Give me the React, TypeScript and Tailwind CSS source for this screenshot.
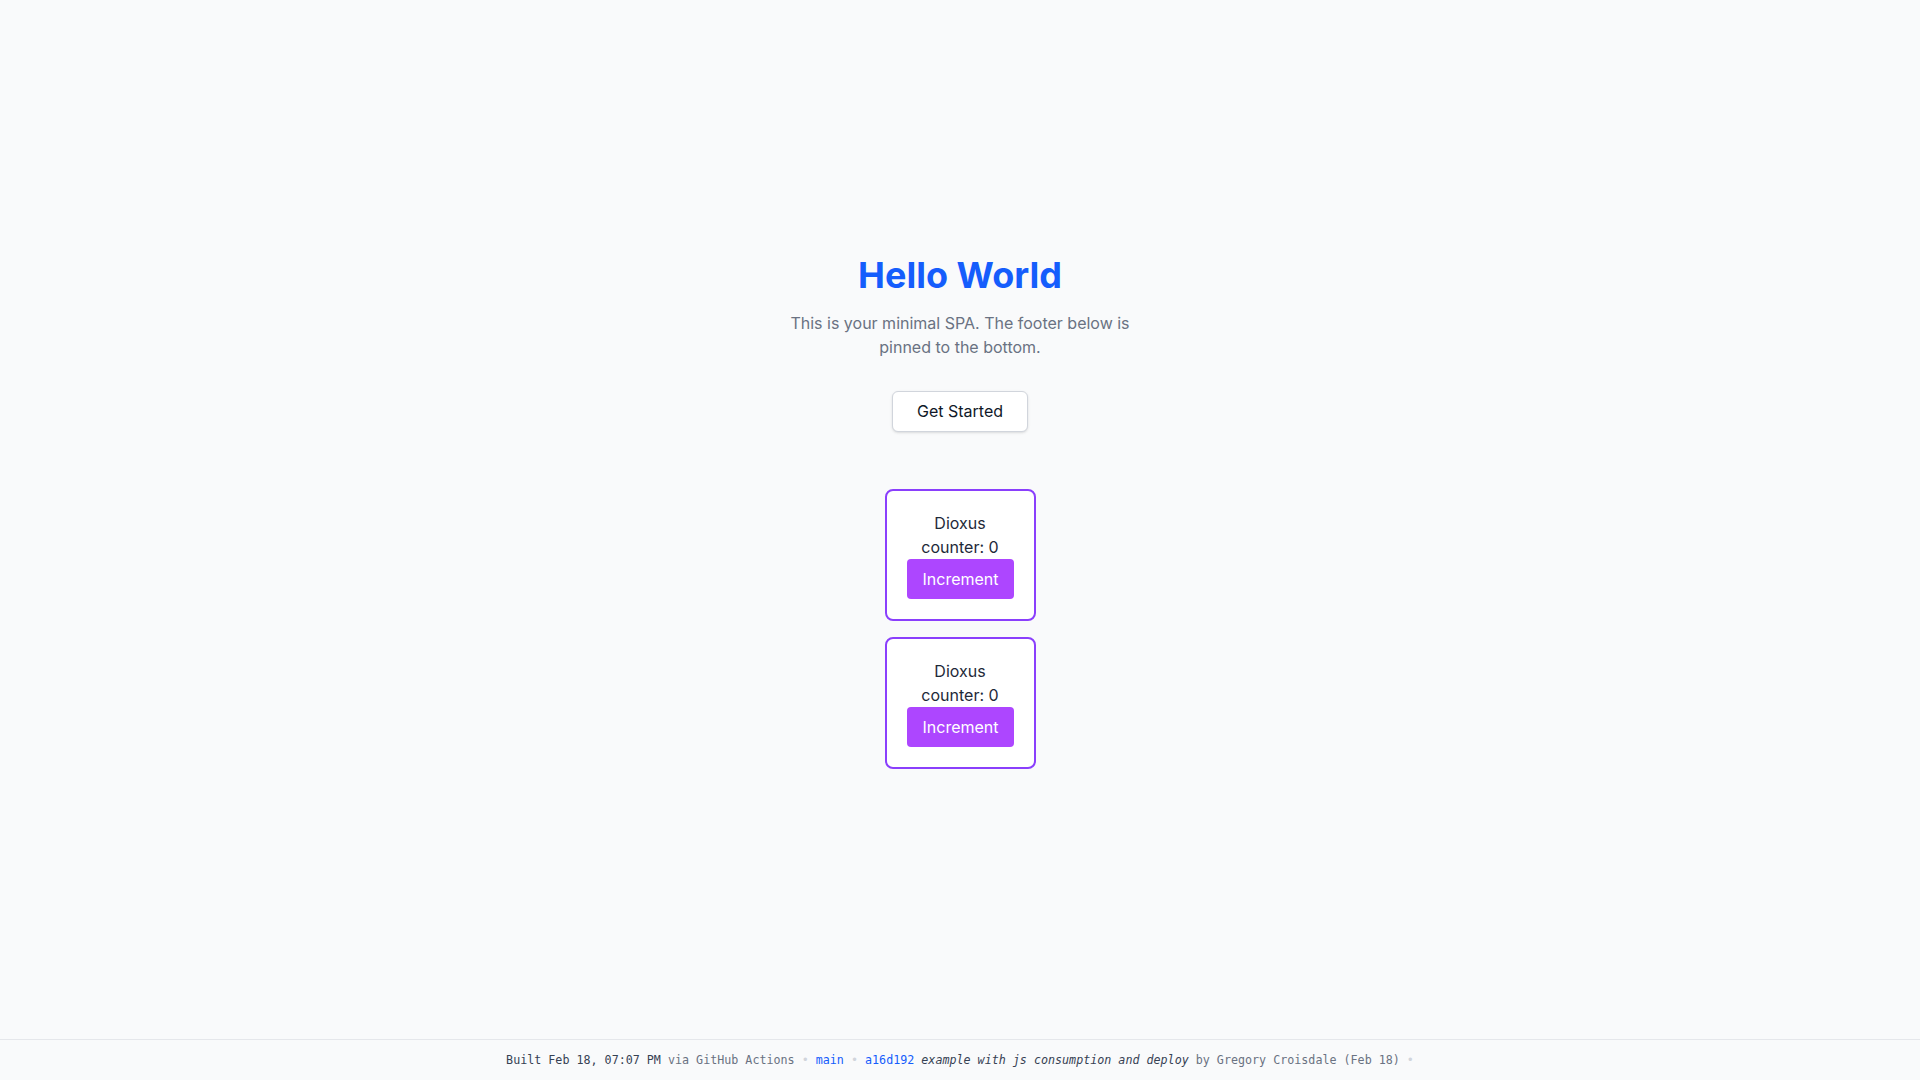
import React, { useState } from "react";

function Counter() {
  const [n, setN] = useState(0);
  return (
    <div className="w-[151px] rounded-lg border-2 border-[#8a3ffc] bg-white p-5 flex flex-col items-center">
      <div className="text-center text-base leading-6 text-[#1e2939]">Dioxus counter: {n}</div>
      <button
        onClick={() => setN(n + 1)}
        className="h-10 w-full rounded bg-[#ad46ff] px-4 text-base text-white"
      >
        Increment
      </button>
    </div>
  );
}

export default function App() {
  return (
    <div className="min-h-screen flex flex-col bg-[#f9fafb] font-['Inter',sans-serif]">
      <main className="flex-1 flex flex-col items-center justify-center pb-4">
        <h1 className="text-4xl leading-10 font-bold text-[#155dfc]">Hello World</h1>
        <p className="mt-4 max-w-[350px] text-center text-base leading-6 text-[#6a7282]">
          This is your minimal SPA. The footer below is pinned to the bottom.
        </p>
        <button className="mt-8 h-[41px] rounded-md border border-[#d1d5dc] bg-white px-6 text-base text-[#101828] shadow-sm">
          Get Started
        </button>
        <div className="mt-[57px] flex flex-col items-center gap-4">
          <Counter />
          <Counter />
        </div>
      </main>
      <footer className="border-t border-[#e5e7eb] bg-[#f9fafb] py-3 text-center font-['DejaVu_Sans_Mono',monospace] text-[11.7px] leading-4 text-[#6a7282] whitespace-pre">
        <span className="text-[#364153]">Built Feb 18, 07:07 PM</span>
        <span> via GitHub Actions</span>
        <span className="text-[#d1d5dc]"> • </span>
        <span className="text-[#155dfc]">main</span>
        <span className="text-[#d1d5dc]"> • </span>
        <span className="text-[#155dfc]">a16d192</span>
        <span> </span>
        <span className="italic text-[#364153]">example with js consumption and deploy</span>
        <span> by Gregory Croisdale (Feb 18)</span>
        <span className="text-[#d1d5dc]"> •</span>
      </footer>
    </div>
  );
}
